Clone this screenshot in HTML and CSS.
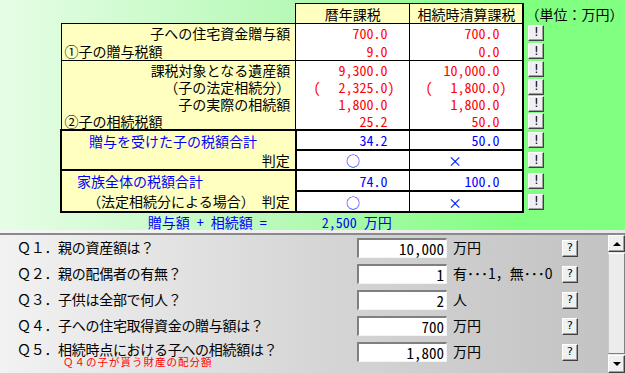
FILE: index.html
```html
<!DOCTYPE html>
<html lang="ja">
<head>
    <meta charset="UTF-8">
    <title>住宅取得資金の贈与</title>
    <link rel="stylesheet" href="styles.css">
</head>
<body>
    <div class="top">
        <table class="calc">
            <colgroup>
                <col class="c-label">
                <col class="c-val">
                <col class="c-val2">
                <col class="c-btn">
            </colgroup>
            <thead>
                <tr>
                    <th class="blank"></th>
                    <th class="hd">暦年課税</th>
                    <th class="hd hd-last">相続時清算課税</th>
                    <th class="unit">（単位：万円）</th>
                </tr>
            </thead>
            <tbody>
                <tr class="r1">
                    <td class="lbl right">子への住宅資金贈与額</td>
                    <td class="num red">700.0</td>
                    <td class="num num2 red">700.0</td>
                    <td class="btns"><button class="bang">!</button></td>
                </tr>
                <tr class="r2">
                    <td class="lbl">①子の贈与税額</td>
                    <td class="num red">9.0</td>
                    <td class="num num2 red">0.0</td>
                    <td class="btns"><button class="bang">!</button></td>
                </tr>
                <tr class="r3 start">
                    <td class="lbl right">課税対象となる遺産額</td>
                    <td class="num red">9,300.0</td>
                    <td class="num num2 red">10,000.0</td>
                    <td class="btns"><button class="bang">!</button></td>
                </tr>
                <tr class="r4">
                    <td class="lbl right">（子の法定相続分）</td>
                    <td class="num paren red"><span class="lp">(</span>2,325.0)</td>
                    <td class="num num2 paren red"><span class="lp">(</span>1,800.0)</td>
                    <td class="btns"><button class="bang">!</button></td>
                </tr>
                <tr class="r5">
                    <td class="lbl right">子の実際の相続額</td>
                    <td class="num red">1,800.0</td>
                    <td class="num num2 red">1,800.0</td>
                    <td class="btns"><button class="bang">!</button></td>
                </tr>
                <tr class="r6">
                    <td class="lbl">②子の相続税額</td>
                    <td class="num red">25.2</td>
                    <td class="num num2 red">50.0</td>
                    <td class="btns"><button class="bang">!</button></td>
                </tr>
                <tr class="r7 thick">
                    <td class="lbl blue ind1">贈与を受けた子の税額合計</td>
                    <td class="num blue">34.2</td>
                    <td class="num num2 blue">50.0</td>
                    <td class="btns"><button class="bang">!</button></td>
                </tr>
                <tr class="r8 thick-end">
                    <td class="lbl right">判定</td>
                    <td class="mark blue">○</td>
                    <td class="mark num2 blue">×</td>
                    <td class="btns"><button class="bang">!</button></td>
                </tr>
                <tr class="r9 thick">
                    <td class="lbl blue ind2">家族全体の税額合計</td>
                    <td class="num blue">74.0</td>
                    <td class="num num2 blue">100.0</td>
                    <td class="btns"><button class="bang">!</button></td>
                </tr>
                <tr class="r10 thick-end">
                    <td class="lbl right">（法定相続分による場合）　判定</td>
                    <td class="mark blue">○</td>
                    <td class="mark num2 blue">×</td>
                    <td class="btns"><button class="bang">!</button></td>
                </tr>
                <tr class="r11">
                    <td class="sum-lbl blue">贈与額 + 相続額 =</td>
                    <td class="sum-val blue" colspan="2">2,500 万円</td>
                    <td></td>
                </tr>
            </tbody>
        </table>
    </div>
    <div class="sep"></div>
    <div class="bottom">
        <div class="qs">
            <div class="qtext">Ｑ１．親の資産額は？</div>
            <div class="field">10,000</div>
            <div class="funit">万円</div>
            <button class="help">?</button>

            <div class="qtext">Ｑ２．親の配偶者の有無？</div>
            <div class="field">1</div>
            <div class="funit">有･･･1，無･･･0</div>
            <button class="help">?</button>

            <div class="qtext">Ｑ３．子供は全部で何人？</div>
            <div class="field">2</div>
            <div class="funit">人</div>
            <button class="help">?</button>

            <div class="qtext">Ｑ４．子への住宅取得資金の贈与額は？</div>
            <div class="field">700</div>
            <div class="funit">万円</div>
            <button class="help">?</button>

            <div class="qtext last">
                <div>Ｑ５．相続時点における子への相続額は？</div>
                <div class="note">Ｑ４の子が貰う財産の配分額</div>
            </div>
            <div class="field">1,800</div>
            <div class="funit">万円</div>
            <button class="help">?</button>
        </div>
        <div class="scroll">
            <div class="arrow up"></div>
            <div class="thumb"></div>
            <div class="arrow down"></div>
        </div>
    </div>
</body>
</html>
```

FILE: styles.css
```css
body {
    margin: 0;
    width: 625px;
    height: 373px;
    overflow: hidden;
    font-family: "Noto Sans CJK JP", sans-serif;
    font-size: 14px;
    color: #000;
}

.top {
    height: 230px;
    box-sizing: border-box;
    padding: 3px 0 0 60px;
    background: linear-gradient(to right, #e6fde6 0%, #b8f9b8 45%, #80ff80 82%);
}

.calc {
    border-collapse: collapse;
    table-layout: fixed;
}

.c-label { width: 237px; }
.c-val { width: 116px; }
.c-val2 { width: 115px; }
.c-btn { width: 90px; }

.calc th,
.calc td {
    padding: 0;
    line-height: 16px;
    white-space: nowrap;
    font-weight: normal;
}

.blank {
    border: none;
}

.hd {
    height: 19px;
    background-color: #ffffc0;
    border: 1px solid #000;
    text-align: center;
}

.hd-last {
    border-right: 2px solid #000;
}

.unit {
    text-align: left;
    padding-left: 1px !important;
    overflow: visible;
}

.lbl {
    background-color: #ffffc0;
    border-left: 1px solid #000;
    border-right: 1px solid #000;
    padding: 0 5px 0 3px !important;
}

.right {
    text-align: right;
}

.ind1 { padding-left: 27px !important; }
.ind2 { padding-left: 15px !important; }

.num,
.mark {
    background-color: #fff;
    border-right: 1px solid #000;
}

.num {
    text-align: right;
    padding-right: 22px !important;
    font-feature-settings: "hwid";
}

.num2 {
    border-right: 2px solid #000;
    padding-right: 23px !important;
}

.paren {
    padding-right: 15px !important;
}

.num2.paren {
    padding-right: 16px !important;
}

.lp {
    margin-right: 18px;
}

.mark {
    text-align: center;
}

.red { color: #ff0000; }
.blue { color: #0000ff; }

.r1 td { height: 18px; border-top: 1px solid #000; }
.r2 td { height: 18px; }
.r3 td, .r4 td, .r5 td, .r6 td { height: 17px; }
.start td { border-top: 1px solid #000; }
.r7 td, .r8 td { height: 18px; }
.r9 td, .r10 td { height: 19px; }

.thick td.lbl,
.thick-end td.lbl {
    border-left: 2px solid #000;
    border-right: 2px solid #000;
}

.thick td:not(.btns) {
    border-top: 2px solid #000;
}

.thick td.num,
.thick-end td.mark {
    border-bottom: 2px solid #000;
}

.r10 td:not(.btns) {
    border-bottom: 2px solid #000;
}

.calc td.btns {
    border: none;
    padding-left: 4px;
    vertical-align: middle;
}

.bang,
.help {
    display: block;
    width: 16px;
    height: 16px;
    padding: 0;
    margin: 0;
    background-color: #f0f0f0;
    border: 1px solid;
    border-color: #fff #404040 #404040 #fff;
    box-shadow: inset -1px -1px 0 #a0a0a0;
    font-family: "DejaVu Sans", sans-serif;
    font-size: 12px;
    line-height: 13px;
    color: #000;
    text-align: center;
}

.r11 td {
    height: 17px;
    border: none;
}

.sum-lbl {
    text-align: right;
    padding-right: 29px !important;
    font-feature-settings: "hwid";
}

.sum-val {
    padding-left: 26px !important;
    font-feature-settings: "hwid";
}

.sep {
    height: 3px;
    background: linear-gradient(to right, #f6f6f6, #e8e8e8);
}

.bottom {
    display: flex;
    height: 138px;
    border-top: 2px solid #8a8a8a;
    background: linear-gradient(to right, #f2f2f2 0%, #d6d6d6 50%, #c2c2c2 100%);
}

.qs {
    flex: 1;
    display: grid;
    grid-template-columns: 340px 90px 115px 16px;
    grid-auto-rows: 20px;
    row-gap: 6px;
    align-items: center;
    padding: 3px 0 0 17px;
}

.qtext {
    letter-spacing: -0.3px;
    line-height: 16px;
    margin-top: -2px;
}

.qtext.last {
    align-self: start;
    margin-top: -1px;
}

.note {
    margin-left: 46px;
    font-size: 10.5px;
    line-height: 10px;
    letter-spacing: 1px;
    color: #ff0000;
}

.field {
    height: 20px;
    box-sizing: border-box;
    background-color: #fff;
    border-style: solid;
    border-width: 2px 1px 1px 2px;
    border-color: #808080 #f4f4f4 #f4f4f4 #808080;
    text-align: right;
    padding-right: 2px;
    font-size: 15px;
    line-height: 17px;
    font-feature-settings: "hwid";
}

.funit {
    padding-left: 6px;
    margin-top: -2px;
    line-height: 16px;
    white-space: nowrap;
}

.help {
    height: 17px;
    font-size: 11px;
    line-height: 14px;
}

.scroll {
    width: 17px;
    display: flex;
    flex-direction: column;
    background-color: #e8e8e8;
}

.arrow {
    height: 17px;
    box-sizing: border-box;
    background-color: #f0f0f0;
    border: 1px solid;
    border-color: #fff #404040 #404040 #fff;
    box-shadow: inset -1px -1px 0 #a0a0a0;
    display: flex;
    align-items: center;
    justify-content: center;
}

.arrow::after {
    content: "";
    border-left: 4px solid transparent;
    border-right: 4px solid transparent;
}

.up::after {
    border-bottom: 4px solid #000;
}

.down::after {
    border-top: 4px solid #000;
}

.down {
    height: 18px;
}

.thumb {
    flex: 1;
    margin: 1px 0;
    box-sizing: border-box;
    background-color: #ececec;
    border: 1px solid;
    border-color: #fff #808080 #808080 #c8c8c8;
}
```
